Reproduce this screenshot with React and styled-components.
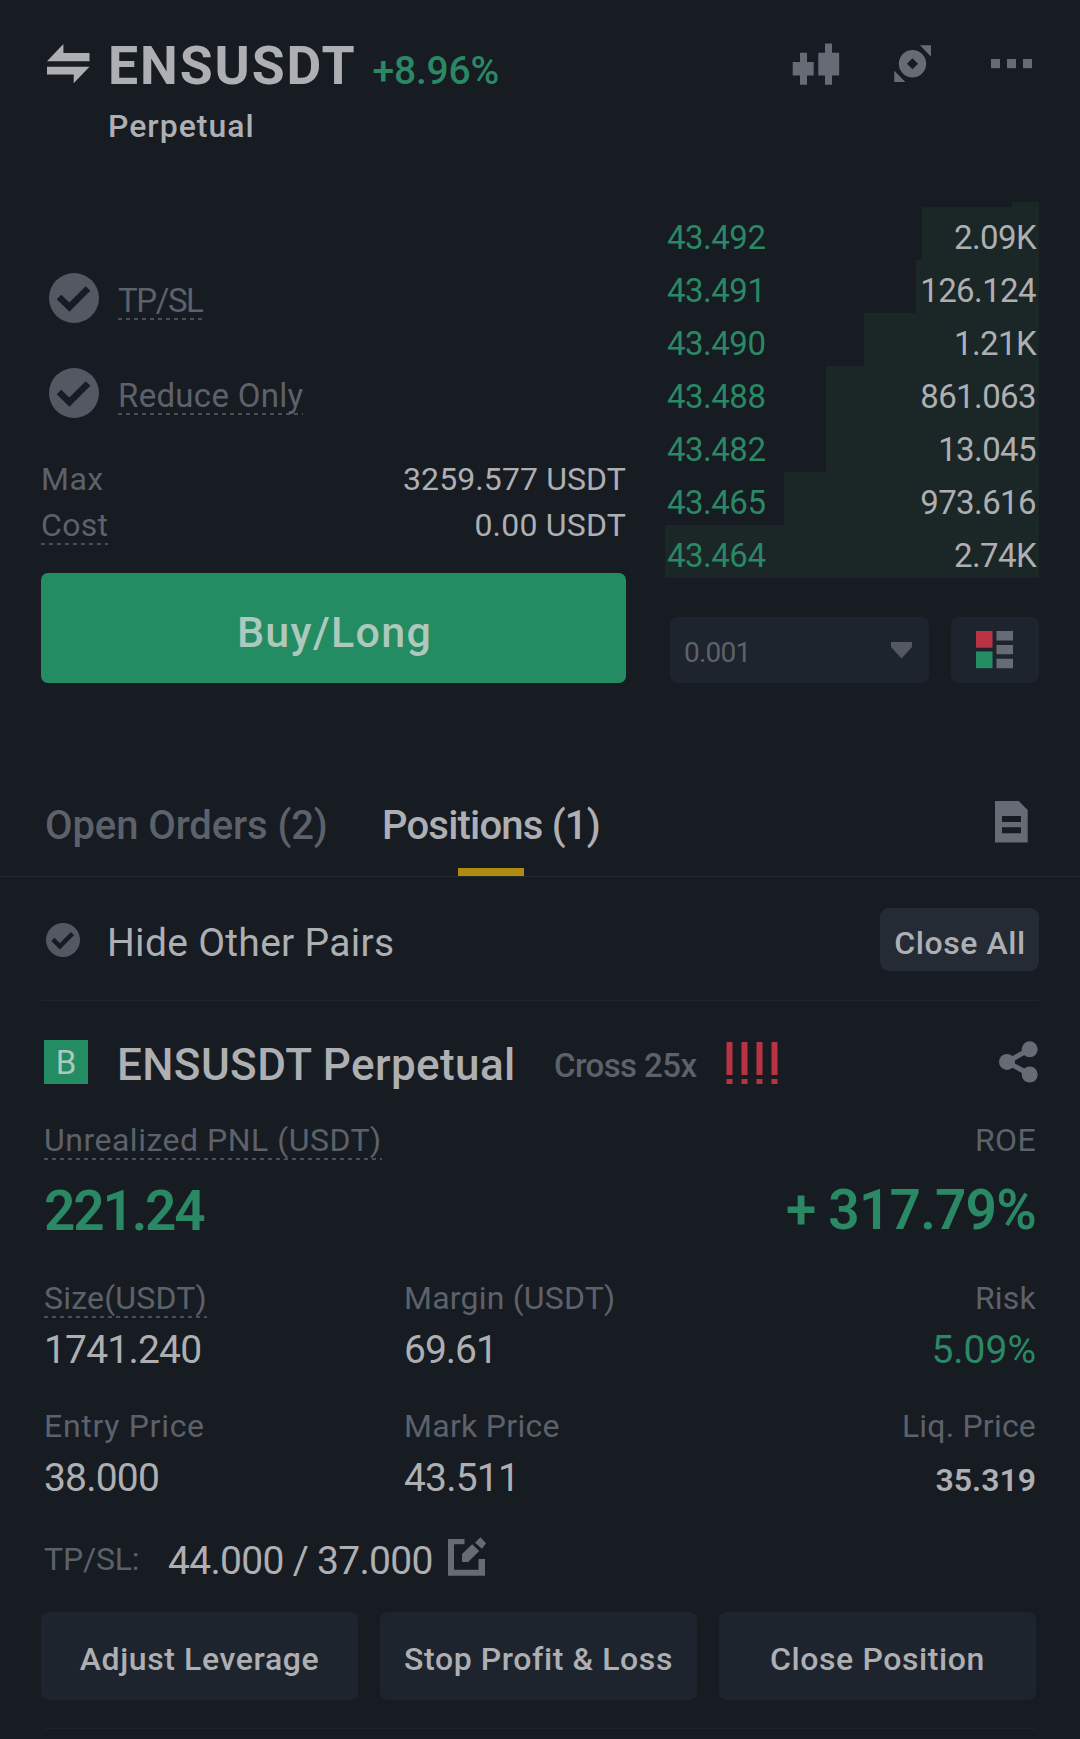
import React from 'react';
import styled, { createGlobalStyle, css } from "styled-components";

const GlobalStyle = createGlobalStyle`
  * {
    box-sizing: border-box;
  }
  body {
    margin: 0;
    background-color: #171b22;
    font-family: Roboto, "Liberation Sans", sans-serif;
  }
`;

const Page = styled.main`
  width: 1080px;
  height: 1739px;
  overflow: hidden;
  background-color: #171b22;
  color: #aeafb2;
`;

const Text = styled.span`
  display: block;
  white-space: nowrap;
  line-height: 1;
  font-size: ${props => props.$size || 32}px;
  font-weight: ${props => props.$weight || 400};
  letter-spacing: ${props => props.$track || 0}px;
`;

const Label = styled(Text)`
  height: 36px;
  color: #5d616a;
  ${props => props.$hint && css`
    padding-bottom: 4px;
    background: repeating-linear-gradient(90deg, #4b4f58 0 4px, transparent 4px 8px) bottom left / 100% 2px no-repeat;
  `}
`;

const Positive = styled(Text)`
  color: #2a8964;
`;

/* ---------- header ---------- */

const Header = styled.header`
  display: flex;
  align-items: flex-start;
  height: 202px;
  padding: 39px 48px 0 47px;
`;

const SwapIcon = styled.svg`
  flex: none;
  margin: 5px 18px 0 0;
`;

const TitleRow = styled.div`
  display: flex;
  align-items: baseline;
  gap: 16px;
  height: 54px;
  margin-bottom: 17px;
`;

const HeaderIcons = styled.div`
  display: flex;
  margin: 4px 0 0 auto;
  fill: #666b75;
`;

const HeaderIcon = styled.svg`
  margin-left: ${props => props.$gap || 0}px;
`;

/* ---------- trade form and order book ---------- */

const Trade = styled.section`
  display: flex;
  justify-content: space-between;
  height: 481px;
  padding: 0 41px;
`;

const Form = styled.div`
  width: 585px;
  padding-top: 71px;
`;

const CheckRow = styled.div`
  display: flex;
  gap: 19px;
  height: 50px;
  padding-left: 8px;
  margin-bottom: 45px;
`;

const CheckLabel = styled(Label)`
  height: 37px;
  margin-top: 10px;
  padding-top: 1px;
`;

const InfoRow = styled.div`
  display: flex;
  justify-content: space-between;
  height: 46px;
`;

const BuyButton = styled.button`
  width: 100%;
  height: 110px;
  margin-top: 18px;
  padding: 9px 0 0 2px;
  border: 0;
  border-radius: 7px;
  background-color: #238c62;
  color: #adc8bd;
  font: 500 43px/1 Roboto, sans-serif;
  letter-spacing: 1.3px;
`;

const Book = styled.div`
  width: 374px;
`;

const BookEdge = styled.div`
  width: 27px;
  height: 5px;
  margin-left: auto;
  background-color: #1b2627;
`;

const BookRow = styled.div`
  display: flex;
  justify-content: space-between;
  align-items: center;
  height: 53px;
  padding: 7px 3px 0 2px;
  background: linear-gradient(#1b2627, #1b2627) right / ${props => props.$depth}px 100% no-repeat;
`;

const BookControls = styled.div`
  display: flex;
  justify-content: space-between;
  margin-top: 39px;
  padding-left: 5px;
`;

const Control = styled.button`
  display: flex;
  align-items: center;
  justify-content: ${props => props.$center ? 'center' : 'space-between'};
  width: ${props => props.$width}px;
  height: 66px;
  padding: ${props => props.$center ? '0' : '0 17px 0 14px'};
  border: 0;
  border-radius: 8px;
  background-color: #1e242d;
  color: #5d616a;
  font-family: inherit;
`;

const StepText = styled(Text)`
  padding-top: 6px;
`;

/* ---------- tabs ---------- */

const TabBar = styled.nav`
  display: grid;
  grid-template-columns: 337px auto 1fr;
  align-items: start;
  height: 77px;
  margin-top: 117px;
  padding: 0 52px 0 45px;
  border-bottom: 1px solid #242931;
`;

const Tab = styled(Text)`
  position: relative;
  height: 76px;
  padding-top: 6px;
  color: ${props => props.$active ? '#aeafb2' : '#5d616a'};
  ${props => props.$active && css`
    &::after {
      content: '';
      position: absolute;
      left: calc(50% - 32.5px);
      bottom: 0;
      width: 66px;
      height: 8px;
      background-color: #b08b14;
    }
  `}
`;

const DocIcon = styled.svg`
  margin: 1px 0 0 auto;
`;

const Filter = styled.div`
  display: flex;
  align-items: center;
  height: 124px;
  margin: 0 41px;
  padding: 2px 0 0 5px;
  border-bottom: 1px solid #20252d;
`;

const FilterText = styled(Text)`
  margin-left: 27px;
  padding-top: 8px;
`;

const CloseAll = styled.button`
  width: 159px;
  height: 63px;
  margin-left: auto;
  padding: 6px 0 0 1px;
  border: 0;
  border-radius: 9px;
  background-color: #242b34;
  color: #aeafb2;
  font: 500 32px/1 Roboto, sans-serif;
  letter-spacing: 0.6px;
`;

/* ---------- position card ---------- */

const Position = styled.section`
  margin-top: 39px;
  padding: 0 44px;
`;

const PositionHead = styled.div`
  display: flex;
  align-items: center;
  height: 44px;
  margin-bottom: 40px;
`;

const Badge = styled.div`
  display: flex;
  align-items: center;
  justify-content: center;
  width: 44px;
  height: 44px;
  margin-right: 29px;
  background-color: #238c62;
  color: #adc8bd;
  font-size: 33px;
`;

const PairName = styled(Text)`
  width: 437px;
  padding-top: 6px;
`;

const Leverage = styled(Text)`
  width: 172px;
  padding-top: 7px;
  color: #5d616a;
`;

const ShareIcon = styled.svg`
  margin: 0 -2px 0 auto;
`;

const Stats = styled.div`
  display: grid;
  grid-template-columns: ${props => props.$columns};
  height: ${props => props.$height}px;
`;

const Stat = styled.div`
  display: flex;
  flex-direction: column;
  align-items: ${props => props.$right ? 'flex-end' : 'flex-start'};
  gap: ${props => props.$gap || 13}px;
`;

const TpslRow = styled.div`
  display: flex;
  height: 39px;
  margin-bottom: 36px;
`;

const TpslLabel = styled(Label)`
  width: 124px;
  padding-top: 6px;
`;

const TpslValue = styled(Text)`
  width: 280px;
  padding-top: 5px;
`;

const Actions = styled.div`
  display: grid;
  grid-template-columns: repeat(3, 317px);
  gap: 22px;
  margin-left: -3px;
`;

const Action = styled.button`
  height: 88px;
  padding: 5px 0 0;
  border: 0;
  border-radius: 7px;
  background-color: #1e242d;
  color: #aeafb2;
  font: 500 32px/1 Roboto, sans-serif;
  letter-spacing: 0.6px;
`;

const Divider = styled.div`
  height: 1px;
  margin-top: 28px;
  background-color: #1e232b;
`;

const orders = [
  { price: '43.492', amount: '2.09K', depth: 117 },
  { price: '43.491', amount: '126.124', depth: 123 },
  { price: '43.490', amount: '1.21K', depth: 175 },
  { price: '43.488', amount: '861.063', depth: 213 },
  { price: '43.482', amount: '13.045', depth: 213 },
  { price: '43.465', amount: '973.616', depth: 255 },
  { price: '43.464', amount: '2.74K', depth: 374 },
];

const CheckIcon = ({ size }) => (
  <svg width={size} height={size} viewBox="0 0 50 50">
    <circle cx="25" cy="25" r="25" fill="#535863" />
    <path d="M10 24l10.400 10.200L39 15.500" fill="none" stroke="#171b22" strokeWidth="6.600" />
  </svg>
);

const App = () => {
  return (
    <Page>
      <GlobalStyle />
      <Header>
        <SwapIcon width="43" height="40" fill="#aeafb2">
          <path d="M0 17.300L16.400 0v9H42.500v8.300zM0 22.700h42.500L26.700 39.200v-8.700H0z" />
        </SwapIcon>
        <div>
          <TitleRow>
            <Text $size={53.5} $weight={700} $track={1.9}>ENSUSDT</Text>
            <Positive $size={39} $weight={500} $track={-0.2}>+8.96%</Positive>
          </TitleRow>
          <Text $weight={500} $track={1}>Perpetual</Text>
        </div>
        <HeaderIcons>
          <HeaderIcon width="48" height="42">
            <path d="M8 9.700h7V19h6.700v13.500H15v9.300H8v-9.300H.700V19H8zM33 .400h7v9.300h7.200V32.500H40v9.300h-7v-9.300h-6.700V9.700H33z" />
          </HeaderIcon>
          <HeaderIcon $gap={54} width="37" height="42">
            <path fillRule="evenodd" d="M18.500 7a13.700 13.700 0 1 0 0 27.400a13.700 13.700 0 1 0 0-27.400zM18.500 15.200l5.500 5.500-5.500 5.500-5.500-5.500z" />
            <path d="M26 2.300h11v11.400zM.300 27.700V39h11z" />
          </HeaderIcon>
          <HeaderIcon $gap={60} width="41" height="42">
            <path d="M0 16h9v9.300H0zM16 16h9v9.300h-9zM32 16h9v9.300h-9z" />
          </HeaderIcon>
        </HeaderIcons>
      </Header>

      <Trade>
        <Form>
          <CheckRow>
            <CheckIcon size={50} />
            <CheckLabel $hint $size={33} $track={-1.4}>TP/SL</CheckLabel>
          </CheckRow>
          <CheckRow>
            <CheckIcon size={50} />
            <CheckLabel $hint $size={33} $track={0.3}>Reduce Only</CheckLabel>
          </CheckRow>
          <InfoRow>
            <Label $track={0.5}>Max</Label>
            <Text $track={0.1}>3259.577 USDT</Text>
          </InfoRow>
          <InfoRow>
            <Label $hint $track={0.3}>Cost</Label>
            <Text $track={0.2}>0.00 USDT</Text>
          </InfoRow>
          <BuyButton>Buy/Long</BuyButton>
        </Form>

        <Book>
          <BookEdge />
          {orders.map(order => (
            <BookRow key={order.price} $depth={order.depth}>
              <Positive $size={33} $track={-0.5}>{order.price}</Positive>
              <Text $size={33} $track={-0.6}>{order.amount}</Text>
            </BookRow>
          ))}
          <BookControls>
            <Control $width={259}>
              <StepText $size={28} $track={-0.8}>0.001</StepText>
              <svg width="21" height="17" fill="#535863">
                <path d="M0 0h21v5L10.500 16.500 0 5z" />
              </svg>
            </Control>
            <Control $width={88} $center>
              <svg width="38" height="38">
                <path d="M0 0H16.500v16.700H0z" fill="#b93345" />
                <path d="M0 20.500H16.500v16.700H0z" fill="#258d62" />
                <path d="M20.500 0h16.500v9.500H20.500zM20.500 14h16.500v9.300H20.500zM20.500 27.800h16.500v9.400H20.500z" fill="#666b75" />
              </svg>
            </Control>
          </BookControls>
        </Book>
      </Trade>

      <TabBar>
        <Tab $size={40} $weight={500} $track={-0.1}>Open Orders (2)</Tab>
        <Tab $size={40} $weight={500} $track={-0.8} $active>Positions (1)</Tab>
        <DocIcon width="33" height="42" fill="#666b75">
          <path fillRule="evenodd" d="M0 0h23.700l9 9v32.500H0zM7 15v6h19v-6zM7 26.300v6h19v-6z" />
        </DocIcon>
      </TabBar>
      <Filter>
        <CheckIcon size={34} />
        <FilterText $size={39} $track={0.3}>Hide Other Pairs</FilterText>
        <CloseAll>Close All</CloseAll>
      </Filter>

      <Position>
        <PositionHead>
          <Badge>B</Badge>
          <PairName $size={44} $weight={500} $track={0.4}>ENSUSDT Perpetual</PairName>
          <Leverage $size={33} $weight={500} $track={-0.6}>Cross 25x</Leverage>
          <svg width="53" height="44" fill="#b93345">
            <path d="M.500 2h6v33h-6zM15.500 2h6v33h-6zM30.500 2h6v33h-6zM45.500 2h6v33h-6zM.500 39h6v5h-6zM15.500 39h6v5h-6zM30.500 39h6v5h-6zM45.500 39h6v5h-6z" />
          </svg>
          <ShareIcon width="39" height="42" fill="#666b75" stroke="#666b75">
            <path d="M30.700 8.300L8 20.900l22.700 12.600" fill="none" strokeWidth="5" />
            <circle cx="8" cy="20.900" r="8" stroke="none" />
            <circle cx="30.700" cy="8.300" r="8" stroke="none" />
            <circle cx="30.700" cy="33.500" r="8" stroke="none" />
          </ShareIcon>
        </PositionHead>

        <Stats $columns="1fr 1fr" $height={158}>
          <Stat $gap={24}>
            <Label $hint $track={0.5}>Unrealized PNL (USDT)</Label>
            <Positive $size={55} $weight={600} $track={-2.2}>221.24</Positive>
          </Stat>
          <Stat $right $gap={23}>
            <Label $track={0.4}>ROE</Label>
            <Positive $size={55} $weight={600} $track={-0.8}>+ 317.79%</Positive>
          </Stat>
        </Stats>
        <Stats $columns="360px 1fr 1fr" $height={128}>
          <Stat>
            <Label $hint $track={0.2}>Size(USDT)</Label>
            <Text $size={39} $track={-0.8}>1741.240</Text>
          </Stat>
          <Stat>
            <Label $track={0.2}>Margin (USDT)</Label>
            <Text $size={39} $track={-1}>69.61</Text>
          </Stat>
          <Stat $right>
            <Label $track={0.2}>Risk</Label>
            <Positive $size={39}>5.09%</Positive>
          </Stat>
        </Stats>
        <Stats $columns="360px 1fr 1fr" $height={127}>
          <Stat>
            <Label $track={0.7}>Entry Price</Label>
            <Text $size={39} $track={-0.8}>38.000</Text>
          </Stat>
          <Stat>
            <Label $track={0.3}>Mark Price</Label>
            <Text $size={39} $track={-0.8}>43.511</Text>
          </Stat>
          <Stat $right $gap={18}>
            <Label $track={0.2}>Liq. Price</Label>
            <Text $weight={600}>35.319</Text>
          </Stat>
        </Stats>
        <TpslRow>
          <TpslLabel $track={-0.2}>TP/SL:</TpslLabel>
          <TpslValue $size={39} $track={-0.7}>44.000 / 37.000</TpslValue>
          <svg width="39" height="39" fill="#666b75">
            <path d="M0 2h16.500v5.300H6v25.400h24.500V22H37v16.700H0z" />
            <path d="M14 17l10.200-9.700 7 6.700-11 11H14zM32.400.300L38 6.300l-4 5.400-7-6z" />
          </svg>
        </TpslRow>
        <Actions>
          <Action>Adjust Leverage</Action>
          <Action>Stop Profit &amp; Loss</Action>
          <Action>Close Position</Action>
        </Actions>
        <Divider />
      </Position>
    </Page>
  )
};

export default App;
